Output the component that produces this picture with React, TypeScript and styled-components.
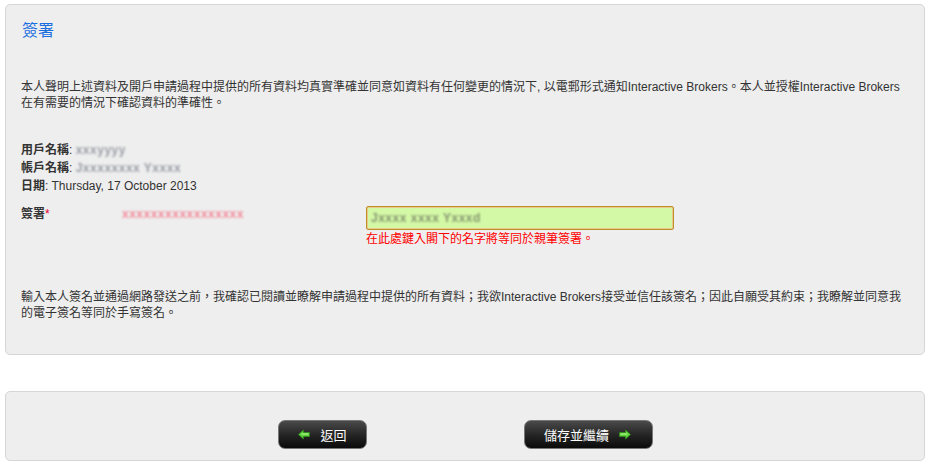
import React from "react";
import styled, { createGlobalStyle } from "styled-components";

const GlobalStyle = createGlobalStyle`
  html, body {
    margin: 0;
    padding: 0;
    background: #ffffff;
  }
  body {
    font-family: "Liberation Sans", "Noto Sans CJK TC", Arial, sans-serif;
    font-size: 12px;
    color: #333333;
  }
`;

const Page = styled.div`
  padding: 4px 6px 0 5px;
  display: flex;
  flex-direction: column;
  gap: 36px;
`;

const Panel = styled.div<{ $tall?: boolean }>`
  background: #eeeeee;
  border: 1px solid #d6d6d6;
  border-radius: 5px;
  box-sizing: border-box;
  height: ${(p) => (p.$tall ? "351px" : "70px")};
`;

const Section = styled.div`
  padding: 14px 15px 0 15px;
`;

const Title = styled.h2`
  margin: 0;
  font-size: 16px;
  font-weight: normal;
  color: #1a6fe0;
  line-height: 24px;
  padding-left: 1px;
`;

const Para = styled.p<{ $top: number }>`
  margin: ${(p) => p.$top}px 0 0 0;
  line-height: 16px;
`;

const InfoList = styled.div`
  margin-top: 30px;
  display: flex;
  flex-direction: column;
`;

const InfoRow = styled.div`
  line-height: 18px;
  display: flex;
  align-items: center;
`;

const Label = styled.span`
  font-weight: bold;
`;

const Blurred = styled.span<{ $color: string }>`
  display: inline-block;
  color: ${(p) => p.$color};
  font-weight: bold;
  filter: blur(1.3px);
  letter-spacing: 0.5px;
`;

const SignRow = styled.div`
  margin-top: 10px;
  display: grid;
  grid-template-columns: 101px 244px 308px;
  align-items: start;
`;

const SignLabel = styled.div`
  font-weight: bold;
  line-height: 18px;
`;

const Star = styled.span`
  color: #e0002a;
  font-weight: normal;
`;

const SignValue = styled.div`
  line-height: 18px;
`;

const InputCol = styled.div`
  display: flex;
  flex-direction: column;
  margin-top: 1px;
`;

const SignBox = styled.div`
  height: 24px;
  box-sizing: border-box;
  background: #d4f9a6;
  border: 1px solid #bf8f2a;
  border-radius: 2px;
  box-shadow: inset 0 0 0 1px #e8c98a;
  padding: 0 4px;
  display: flex;
  align-items: center;
`;

const Hint = styled.div`
  color: #ff0000;
  line-height: 18px;
`;

const ButtonBar = styled.div`
  height: 100%;
  display: flex;
  justify-content: center;
  align-items: flex-start;
  padding-top: 28px;
  box-sizing: border-box;
  gap: 157px;
`;

const Button = styled.button<{ $w: number }>`
  width: ${(p) => p.$w}px;
  height: 29px;
  border: 1px solid #777;
  border-radius: 7px;
  background: linear-gradient(#4a4a4a 0%, #262626 50%, #0a0a0a 100%);
  color: #ffffff;
  font-family: "Liberation Sans", "Noto Sans CJK TC", Arial, sans-serif;
  font-size: 13px;
  display: flex;
  align-items: center;
  justify-content: center;
  gap: 10px;
  padding: 0;
  cursor: pointer;
`;

function Arrow({ dir }: { dir: "left" | "right" }) {
  const pts =
    dir === "left"
      ? "1,5 6,0.5 6,3 12,3 12,7 6,7 6,9.5"
      : "11,5 6,0.5 6,3 0,3 0,7 6,7 6,9.5";
  return (
    <svg width="13" height="11" viewBox="-0.5 -0.5 13 11">
      <polygon points={pts} fill="#5fd43a" stroke="#2f8a1c" strokeWidth="0.8" />
      <polygon
        points={dir === "left" ? "4,4 11,4 11,5 4,5" : "1,4 8,4 8,5 1,5"}
        fill="#b6f59a"
      />
    </svg>
  );
}

export default function App() {
  return (
    <>
      <GlobalStyle />
      <Page>
        <Panel $tall>
          <Section>
            <Title>簽署</Title>
            <Para $top={36}>
              本人聲明上述資料及開戶申請過程中提供的所有資料均真實準確並同意如資料有任何變更的情況下, 以電郵形式通知Interactive Brokers。本人並授權Interactive Brokers
              在有需要的情況下確認資料的準確性。
            </Para>
            <InfoList>
              <InfoRow>
                <Label>用戶名稱</Label>:&nbsp;
                <Blurred $color="#9a9ea6">xxxyyyy</Blurred>
              </InfoRow>
              <InfoRow>
                <Label>帳戶名稱</Label>:&nbsp;
                <Blurred $color="#9a9ea6">Jxxxxxxxx Yxxxx</Blurred>
              </InfoRow>
              <InfoRow>
                <Label>日期</Label>: Thursday, 17 October 2013
              </InfoRow>
            </InfoList>
            <SignRow>
              <SignLabel>
                簽署<Star>*</Star>
              </SignLabel>
              <SignValue>
                <Blurred $color="#f2899b">xxxxxxxxxxxxxxxxx</Blurred>
              </SignValue>
              <InputCol>
                <SignBox>
                  <Blurred $color="#859670">Jxxxx xxxx Yxxxd</Blurred>
                </SignBox>
                <Hint>在此處鍵入閣下的名字將等同於親筆簽署。</Hint>
              </InputCol>
            </SignRow>
            <Para $top={41}>
              輸入本人簽名並通過網路發送之前，我確認已閱讀並瞭解申請過程中提供的所有資料；我欲Interactive Brokers接受並信任該簽名；因此自願受其約束；我瞭解並同意我的電子簽名等同於手寫簽名。
            </Para>
          </Section>
        </Panel>
        <Panel>
          <ButtonBar>
            <Button $w={89}>
              <Arrow dir="left" />
              返回
            </Button>
            <Button $w={129}>
              儲存並繼續
              <Arrow dir="right" />
            </Button>
          </ButtonBar>
        </Panel>
      </Page>
    </>
  );
}
